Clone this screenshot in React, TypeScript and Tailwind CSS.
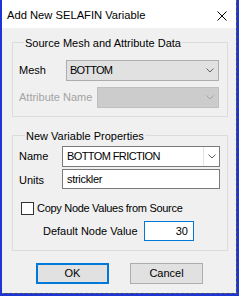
const Chevron = ({ color = "#606060" }: { color?: string }) => (
  <svg width="8" height="5" viewBox="0 0 8 5" className="shrink-0">
    <polyline points="0.5,0.5 4,4 7.5,0.5" fill="none" stroke={color} strokeWidth="1" />
  </svg>
);

export default function App() {
  return (
    <div className="w-[239px] h-[296px] bg-[#1c35d4] pl-[2px] pr-[2px] pb-[2px] flex flex-col font-['Liberation_Sans',Arial,sans-serif] text-[11px] leading-[13px] text-black">
      <div className="flex-1 flex flex-col border-r border-b border-dashed border-[#5a5a5a]">
        {/* Title bar */}
        <div className="h-[28px] shrink-0 bg-white flex items-center pl-[5px]">
          <span className="text-[11.2px] pt-[3px]">Add New SELAFIN Variable</span>
          <svg width="10" height="10" viewBox="0 0 10 10" className="ml-auto mr-[9px] mt-[4px]">
            <path d="M0.5 0.5 L9.5 9.5 M9.5 0.5 L0.5 9.5" stroke="#000" strokeWidth="1" />
          </svg>
        </div>

        {/* Body */}
        <div className="flex-1 bg-[#f0f0f0] flex flex-col">
          <fieldset className="ml-[10px] mt-[7px] w-[216px] border border-[#dcdcdc] pl-[6px] pr-[8px] pb-[8px]">
            <legend className="ml-[5px] px-[1px] pt-[2px] leading-[13px]">Source Mesh and Attribute Data</legend>
            <div className="flex items-center mt-[10px]">
              <span className="w-[47px] shrink-0">Mesh</span>
              <div className="flex-1 h-[21px] border border-[#adadad] bg-[#e1e1e1] flex items-center pl-[3px] pr-[4px]">
                <span className="flex-1 tracking-[-0.8px]">BOTTOM</span>
                <Chevron />
              </div>
            </div>
            <div className="flex items-center mt-[6px]">
              <span className="w-[78px] shrink-0 text-[#a3a3a3]">Attribute Name</span>
              <div className="flex-1 h-[21px] border border-[#bfbfbf] bg-[#cccccc] flex items-center justify-end pr-[4px]">
                <Chevron color="#a3a3a3" />
              </div>
            </div>
          </fieldset>

          <fieldset className="ml-[10px] mt-[11px] w-[216px] border border-[#dcdcdc] pl-[6px] pr-[7px] pb-[9px]">
            <legend className="ml-[6px] px-[1px] pt-[2px] leading-[13px]">New Variable Properties</legend>
            <div className="flex items-center mt-[3px]">
              <span className="w-[43px] shrink-0">Name</span>
              <div className="flex-1 h-[21px] border border-[#7a7a7a] bg-white flex items-center">
                <span className="flex-1 pl-[4px] tracking-[-0.6px]">BOTTOM FRICTION</span>
                <div className="w-[16px] h-full border-l border-[#dde4ec] flex items-center justify-center">
                  <Chevron />
                </div>
              </div>
            </div>
            <div className="flex items-center mt-[2px]">
              <span className="w-[43px] shrink-0 pt-[2px]">Units</span>
              <div className="flex-1 h-[20px] border border-[#7a7a7a] bg-white flex items-center pl-[4px] tracking-[-0.3px]">
                strickler
              </div>
            </div>
            <div className="flex items-center mt-[13px] ml-[2px]">
              <div className="w-[13px] h-[13px] border border-[#333333] bg-white shrink-0" />
              <span className="ml-[3px] tracking-[-0.3px]">Copy Node Values from Source</span>
            </div>
            <div className="flex items-center mt-[6px] ml-[24px]">
              <span className="w-[101px] shrink-0">Default Node Value</span>
              <div className="w-[50px] h-[20px] border border-[#0078d7] bg-white flex items-center justify-end pr-[5px]">
                30
              </div>
            </div>
          </fieldset>

          <div className="flex mt-[12px] ml-[34px] gap-[21px]">
            <button className="w-[73px] h-[21px] border-2 border-[#0078d7] bg-[#e1e1e1] flex items-center justify-center">
              OK
            </button>
            <button className="w-[73px] h-[21px] border border-[#adadad] bg-[#e1e1e1] flex items-center justify-center">
              Cancel
            </button>
          </div>
        </div>
      </div>
    </div>
  );
}
